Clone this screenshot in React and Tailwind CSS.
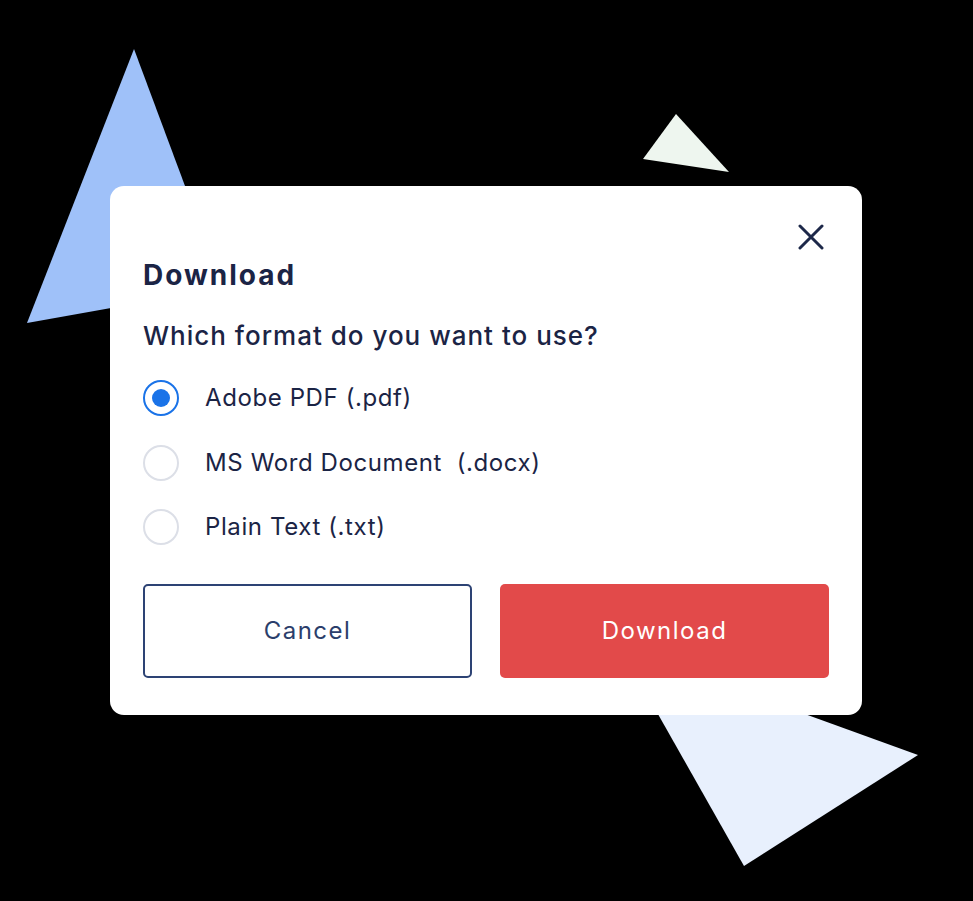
import { useState } from 'react'

/* ── Decorative triangles behind the dialog ─────────────── */
function Shapes() {
  return (
    <svg
      className="absolute inset-0 pointer-events-none"
      width="973"
      height="901"
      viewBox="0 0 973 901"
    >
      <polygon points="134,49 27,323 223,288" fill="#9fc1f9" />
      <polygon points="676,114 643,159 729,172" fill="#eef6ef" />
      <polygon points="620,647 918,755 744,866" fill="#e8f0fd" />
    </svg>
  )
}

/* ── Radio option row ───────────────────────────────────── */
function Option({ label, checked, onSelect }) {
  return (
    <button
      type="button"
      role="radio"
      aria-checked={checked}
      onClick={onSelect}
      className="flex items-center h-[44px] text-left"
    >
      <span
        className={`w-[36px] h-[36px] rounded-full shrink-0 flex items-center justify-center border-2
          ${checked ? 'border-[#1a73e8]' : 'border-[#dcdfe7]'}`}
      >
        {checked && <span className="w-[18px] h-[18px] rounded-full bg-[#1a73e8]" />}
      </span>
      <span className="ml-[26px] text-[24px] text-[#1b2445] tracking-[0.6px] whitespace-pre">
        {label}
      </span>
    </button>
  )
}

const FORMATS = ['Adobe PDF (.pdf)', 'MS Word Document  (.docx)', 'Plain Text (.txt)']

export default function App() {
  const [format, setFormat] = useState(0)

  return (
    <div
      className="relative w-[973px] h-[901px] bg-black overflow-hidden pt-[186px] pl-[110px]"
      style={{ fontFamily: 'Inter, "Liberation Sans", sans-serif' }}
    >
      <Shapes />

      {/* Dialog */}
      <div className="relative w-[752px] bg-white rounded-[14px] px-[33px] pt-[38px] pb-[37px] flex flex-col">
        <div className="flex justify-end pr-[5px] h-[26px]">
          <button type="button" aria-label="Close" className="w-[26px] h-[26px] text-[#1d2849]">
            <svg viewBox="0 0 26 26" width="26" height="26" fill="none" stroke="currentColor" strokeWidth="3" strokeLinecap="round">
              <path d="M2 2 L24 24 M24 2 L2 24" />
            </svg>
          </button>
        </div>

        <h2 className="mt-[8px] h-[34px] leading-[34px] text-[28px] font-bold text-[#1b2445] tracking-[2px]">
          Download
        </h2>

        <p className="mt-[27px] h-[34px] leading-[34px] text-[26px] font-medium text-[#1b2445] tracking-[1px]">
          Which format do you want to use?
        </p>

        <div role="radiogroup" className="mt-[23px] flex flex-col gap-[20.5px]">
          {FORMATS.map((f, i) => (
            <Option key={f} label={f} checked={format === i} onSelect={() => setFormat(i)} />
          ))}
        </div>

        <div className="mt-[35px] grid grid-cols-2 gap-[28px]">
          <button
            type="button"
            className="h-[94px] rounded-[5px] border-2 border-[#2d4374] text-[#2b3e6b] text-[24px] tracking-[1.5px]"
          >
            Cancel
          </button>
          <button
            type="button"
            className="h-[94px] rounded-[5px] bg-[#e24a4a] text-white text-[24px] tracking-[1.5px]"
          >
            Download
          </button>
        </div>
      </div>
    </div>
  )
}
